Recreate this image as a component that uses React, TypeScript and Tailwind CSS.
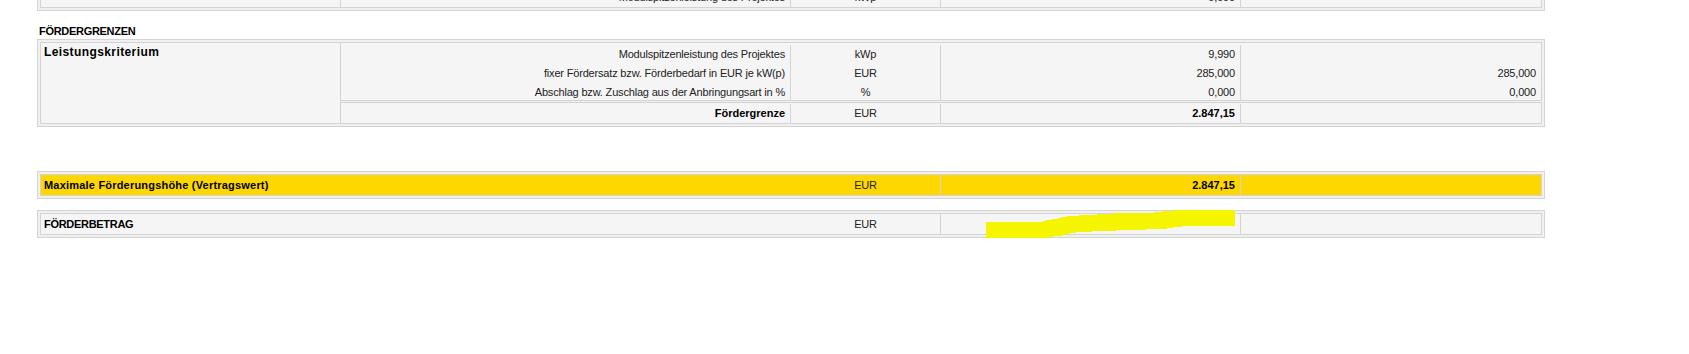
import React from 'react';

const line = 'border-[#d4d4d4]';

const Highlighter: React.FC = () => (
  <svg
    className="pointer-events-none absolute left-[948px] top-[-1px]"
    width="250"
    height="30"
    viewBox="0 0 250 30"
    shapeRendering="crispEdges"
  >
    <polygon
      fill="#f5f500"
      points="0,12 56.7,12 56.7,11 63,10 71.7,8.7 76.7,7 85,6 101.7,5 115,4.3 131.7,3.3 166.7,2.7 178,1.3 190,0.3 249,0 249,16 203,16 188,17 185,18.3 166.7,19.3 135,20.3 116.7,21 95,22 85,23 81.7,24.3 75,25.7 63.3,27 63,28.3 5,28.3 0,27.7"
    />
  </svg>
);

const App: React.FC = () => {
  return (
    <div className="h-[354px] w-full overflow-hidden bg-white pl-[37px] font-['Liberation_Sans',Arial,sans-serif] text-[11px] tracking-[-0.18px] text-[#222]">
      {/* tail of the previous table */}
      <div className={`-mt-[16px] w-[1508px] border ${line} bg-[#f0f0f0] p-[2px]`}>
        <div className={`flex h-[21px] border ${line} bg-[#f5f5f5] leading-[19px]`}>
          <div className={`w-[300px] border-r ${line}`} />
          <div className={`w-[450px] border-r ${line} pr-[5px] text-right`}>Modulspitzenleistung des Projektes</div>
          <div className={`w-[150px] border-r ${line} text-center`}>kWp</div>
          <div className={`w-[300px] border-r ${line} pr-[5px] text-right`}>9,990</div>
          <div className="flex-1" />
        </div>
      </div>

      <div className="mt-[12px] pl-[2px] font-bold leading-[16px] tracking-[-0.3px] text-black">FÖRDERGRENZEN</div>

      {/* Fördergrenzen table */}
      <div className={`flex w-[1508px] border ${line} bg-[#f0f0f0] p-[2px]`}>
        <div className={`h-[82px] w-[301px] border ${line} bg-[#f5f5f5] pl-[3px] pt-[1px] text-[12px] font-bold leading-[16px] tracking-[0.4px] text-black`}>
          Leistungskriterium
        </div>
        <div className="flex flex-1 flex-col">
          <div className={`flex h-[59px] border-y border-r ${line} bg-[#f5f5f5] pt-[2px] leading-[19px]`}>
            <div className={`w-[450px] border-r ${line} pr-[5px] text-right`}>
              <div>Modulspitzenleistung des Projektes</div>
              <div>fixer Fördersatz bzw. Förderbedarf in EUR je kW(p)</div>
              <div>Abschlag bzw. Zuschlag aus der Anbringungsart in %</div>
            </div>
            <div className={`w-[150px] border-r ${line} text-center`}>
              <div>kWp</div>
              <div>EUR</div>
              <div>%</div>
            </div>
            <div className={`w-[300px] border-r ${line} pr-[5px] text-right`}>
              <div>9,990</div>
              <div>285,000</div>
              <div>0,000</div>
            </div>
            <div className="flex-1 pr-[5px] text-right">
              <div>&nbsp;</div>
              <div>285,000</div>
              <div>0,000</div>
            </div>
          </div>
          <div className={`mt-[1px] flex h-[22px] border-y border-r ${line} bg-[#f5f5f5] pt-[1px] leading-[19px]`}>
            <div className={`w-[450px] border-r ${line} pr-[5px] text-right font-bold tracking-normal text-black`}>Fördergrenze</div>
            <div className={`w-[150px] border-r ${line} text-center`}>EUR</div>
            <div className={`w-[300px] border-r ${line} pr-[5px] text-right font-bold tracking-normal text-black`}>2.847,15</div>
            <div className="flex-1" />
          </div>
        </div>
      </div>

      {/* Maximale Förderungshöhe */}
      <div className={`mt-[44px] w-[1508px] border ${line} bg-[#f0f0f0] p-[2px]`}>
        <div className={`flex h-[22px] border ${line} bg-[#ffd700] leading-[20px]`}>
          <div className={`flex w-[900px] border-r ${line}`}>
            <div className="flex-1 pl-[3px] font-bold tracking-[0.2px] text-black">Maximale Förderungshöhe (Vertragswert)</div>
            <div className="w-[149px] text-center">EUR</div>
          </div>
          <div className={`w-[300px] border-r ${line} pr-[5px] text-right font-bold tracking-normal text-black`}>2.847,15</div>
          <div className="flex-1" />
        </div>
      </div>

      {/* Förderbetrag */}
      <div className={`relative mt-[11px] w-[1508px] border ${line} bg-[#f0f0f0] p-[2px]`}>
        <div className={`flex h-[22px] border ${line} bg-[#f5f5f5] leading-[20px]`}>
          <div className={`flex w-[900px] border-r ${line}`}>
            <div className="flex-1 pl-[3px] font-bold tracking-[-0.3px] text-black">FÖRDERBETRAG</div>
            <div className="w-[149px] text-center">EUR</div>
          </div>
          <div className={`w-[300px] border-r ${line}`} />
          <div className="flex-1" />
        </div>
        <Highlighter />
      </div>
    </div>
  );
};

export default App;
